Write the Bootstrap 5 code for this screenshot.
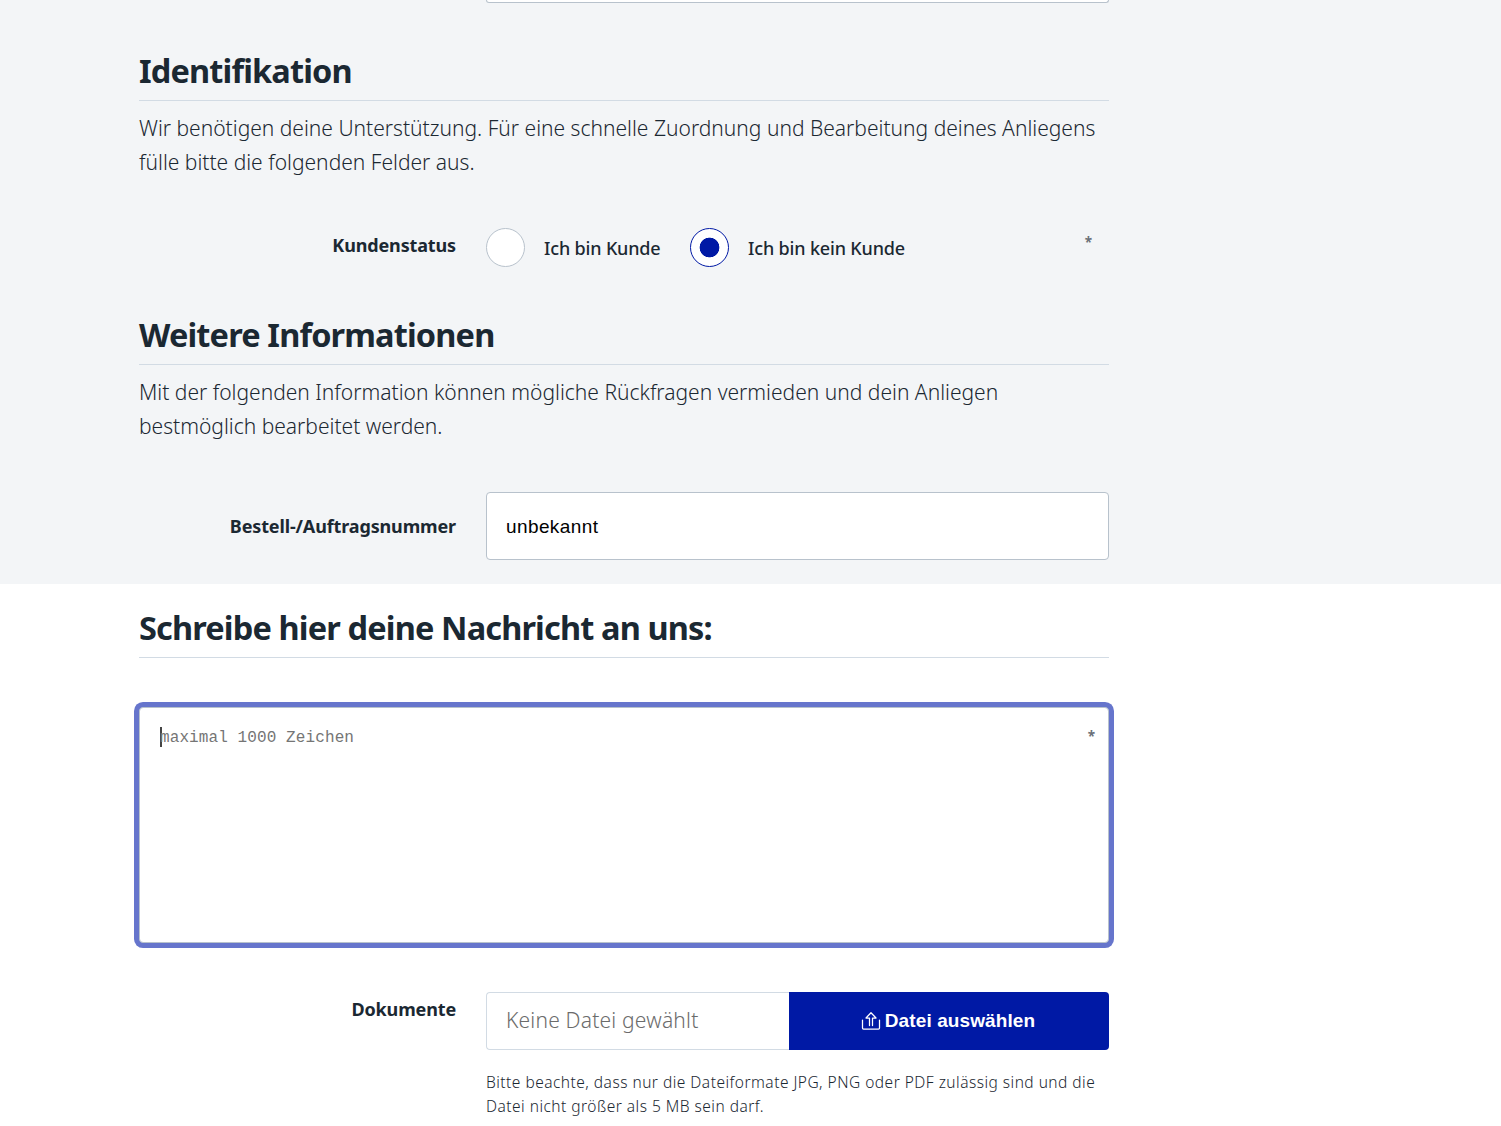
<!DOCTYPE html>
<html lang="de">
<head>
  <meta charset="UTF-8" />
  <meta name="viewport" content="width=device-width, initial-scale=1" />
  <title>Kontaktformular</title>
  <link href="https://cdn.jsdelivr.net/npm/bootstrap@5.3.3/dist/css/bootstrap.min.css" rel="stylesheet" />
  <style>
    body { font-family: "Noto Sans", "Open Sans", sans-serif; color: #1b2832; background: #fff; overflow: hidden; }
    .form-wrap { width: 970px; margin-left: 139px; }
    .grey-area { background: #f3f5f7; height: 584px; }
    .section-title { font-size: 32.5px; font-weight: 700; letter-spacing: -.85px; line-height: 42px; padding-bottom: 8px; margin: 47px 0 0; border-bottom: 1px solid #d2dbe4; white-space: nowrap; }
    .message-title { margin-top: 23px; }
    .intro { font-weight: 300; font-size: 21px; line-height: 34px; margin: 0; padding-top: 10px; height: 79px; white-space: nowrap; }
    .field-row { margin-top: 48px; }
    .file-row { margin-top: 49px; }
    .label-col { width: 317px; margin-right: 30px; flex: none; text-align: right; font-weight: 700; font-size: 18px; line-height: 24px; letter-spacing: -.14px; }
    .label-top { padding-top: 5px; }
    .field-col { width: 623px; flex: none; }
    .prev-field { height: 3px; border: 1px solid #b8c2cc; border-top: 0; border-radius: 0 0 4px 4px; background: #fff; margin-left: 347px; }
    .order-input { height: 68px; border: 1px solid #b8c2cc; border-radius: 4px; padding: 2px 19px 0; font: 19px "Liberation Sans", sans-serif; color: #000; letter-spacing: .4px; }
    .order-input:focus { box-shadow: 0 0 0 5px #6675cc; }
    .big-radio.form-check-input { width: 39px; height: 39px; margin: 0; float: none; border: 1px solid #b8c2cc; background-color: #fff; flex: none; }
    .big-radio.form-check-input:checked { border-color: #0019a5; background-color: #fff; background-image: radial-gradient(circle, #0019a5 9.5px, transparent 10.2px); background-size: 100% 100%; }
    .radio-text { font-size: 18px; font-weight: 500; line-height: 24px; letter-spacing: -.16px; margin-left: 19px; white-space: nowrap; }
    .radio-first { width: 146px; }
    .star { color: #6b7178; font-size: 13.5px; font-weight: 700; line-height: 18px; }
    .status-star { margin: 0 17px 11px auto; }
    .message-box { height: 236px; margin-top: 49px; border: 1px solid #b8c2cc; border-radius: 4px; box-shadow: 0 0 0 5px #6675cc; padding: 19px 13px 0 20px; background: #fff; }
    .placeholder-text { font: 16px/22px "Liberation Mono", monospace; color: #757575; border-left: 2px solid #444; height: 20px; letter-spacing: .1px; text-indent: -2px; }
    .file-group { height: 58px; }
    .file-name { width: 303px; border: 1px solid #d2dbe4; border-right: 0; border-radius: 4px 0 0 4px; padding-left: 19px; font-weight: 300; font-size: 21px; letter-spacing: .2px; color: #6b6b6b; }
    .btn-upload { --bs-btn-bg: #0019a5; --bs-btn-color: #fff; --bs-btn-hover-bg: #001487; --bs-btn-hover-color: #fff; width: 320px; border: 0; border-radius: 0 4px 4px 0; font: bold 19px "Liberation Sans", sans-serif; letter-spacing: .1px; gap: 4px; padding-right: 14px; }
    .file-note { font-size: 15.5px; font-weight: 350; letter-spacing: .48px; line-height: 24px; margin: 20px 0 0; white-space: nowrap; }
  </style>
</head>
<body>
  <form>
    <section class="grey-area">
      <div class="form-wrap">
        <div class="prev-field"></div>

        <h2 class="section-title">Identifikation</h2>
        <p class="intro">Wir benötigen deine Unterstützung. Für eine schnelle Zuordnung und Bearbeitung deines Anliegens<br />fülle bitte die folgenden Felder aus.</p>

        <div class="field-row d-flex">
          <div class="label-col label-top">Kundenstatus</div>
          <div class="field-col d-flex align-items-center">
            <input class="form-check-input big-radio" type="radio" name="status" id="kunde" />
            <label class="radio-text radio-first" for="kunde">Ich bin Kunde</label>
            <input class="form-check-input big-radio" type="radio" name="status" id="keinKunde" checked />
            <label class="radio-text" for="keinKunde">Ich bin kein Kunde</label>
            <span class="star status-star">*</span>
          </div>
        </div>

        <h2 class="section-title">Weitere Informationen</h2>
        <p class="intro">Mit der folgenden Information können mögliche Rückfragen vermieden und dein Anliegen<br />bestmöglich bearbeitet werden.</p>

        <div class="field-row d-flex align-items-center">
          <label class="label-col" for="auftrag">Bestell-/Auftragsnummer</label>
          <div class="field-col"><input class="form-control order-input" id="auftrag" value="unbekannt" /></div>
        </div>
      </div>
    </section>

    <section class="form-wrap">
      <h2 class="section-title message-title">Schreibe hier deine Nachricht an uns:</h2>
      <div class="message-box d-flex justify-content-between">
        <div class="placeholder-text">maximal 1000 Zeichen</div>
        <span class="star">*</span>
      </div>

      <div class="file-row d-flex">
        <div class="label-col label-top">Dokumente</div>
        <div class="field-col">
          <div class="d-flex file-group">
            <div class="file-name d-flex align-items-center">Keine Datei gewählt</div>
            <button type="button" class="btn btn-upload d-flex align-items-center justify-content-center">
              <svg width="20" height="20" viewBox="0 0 20 20" fill="none" stroke="#fff" stroke-width="1.25" stroke-linejoin="round" stroke-linecap="round"><path d="M8.500 14.500V7H5L10 1.700 15 7H11.500v7.500M1.500 9V17q0 1 1 1h15q1 0 1-1V9" /></svg>
              <span>Datei auswählen</span>
            </button>
          </div>
          <p class="file-note">Bitte beachte, dass nur die Dateiformate JPG, PNG oder PDF zulässig sind und die<br />Datei nicht größer als 5 MB sein darf.</p>
        </div>
      </div>
    </section>
  </form>

  <script src="https://cdn.jsdelivr.net/npm/bootstrap@5.3.3/dist/js/bootstrap.bundle.min.js"></script>
</body>
</html>
